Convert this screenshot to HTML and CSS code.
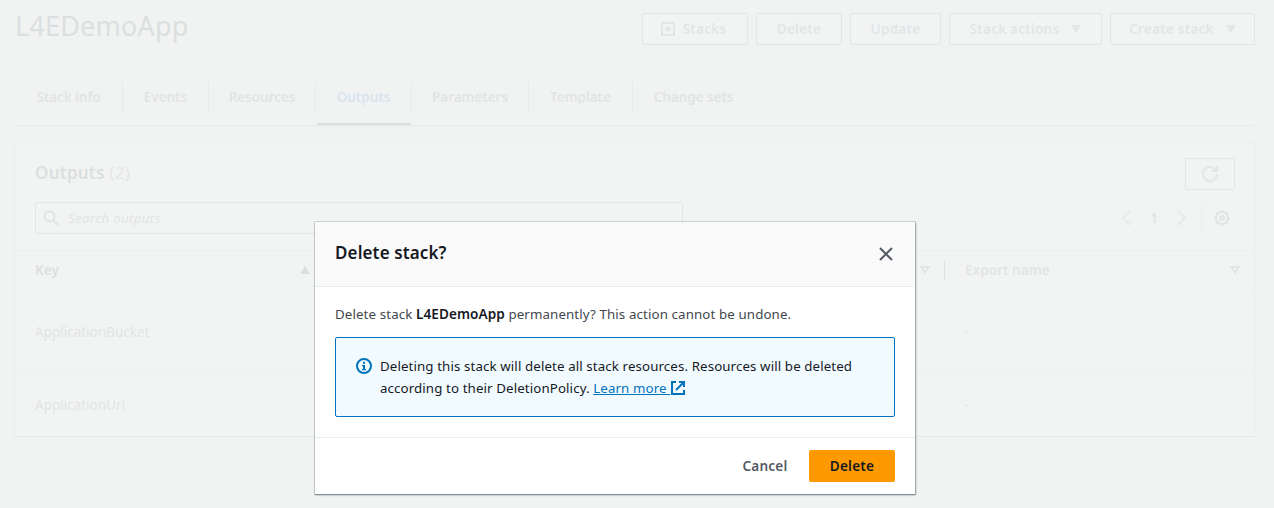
FILE: index.html
```html
<!DOCTYPE html>
<html lang="en">
<head>
<meta charset="utf-8">
<title>L4EDemoApp - Outputs</title>
<link rel="stylesheet" href="styles.css">
</head>
<body>
<main class="page">
  <header class="page-header">
    <h1 class="title">L4EDemoApp</h1>
    <div class="actions">
      <button class="btn btn-stacks"><svg class="icon" width="16" height="16" viewBox="0 0 16 16"><path d="M2 2h12v12H2zM8 5v6M5 8h6" fill="none" stroke="currentColor" stroke-width="2"/></svg><span>Stacks</span></button>
      <button class="btn btn-delete">Delete</button>
      <button class="btn btn-update">Update</button>
      <button class="btn btn-actions"><span>Stack actions</span><svg width="10" height="8" viewBox="0 0 10 8"><path d="M0 0h10L5 8z" fill="currentColor"/></svg></button>
      <button class="btn btn-create"><span>Create stack</span><svg width="10" height="8" viewBox="0 0 10 8"><path d="M0 0h10L5 8z" fill="currentColor"/></svg></button>
    </div>
  </header>
  <nav class="tabs">
    <a class="tab tab-info">Stack info</a>
    <a class="tab tab-events">Events</a>
    <a class="tab tab-resources">Resources</a>
    <a class="tab tab-outputs active">Outputs</a>
    <a class="tab tab-parameters">Parameters</a>
    <a class="tab tab-template">Template</a>
    <a class="tab tab-changes">Change sets</a>
  </nav>
  <section class="card">
    <div class="card-header">
      <h2 class="card-title">Outputs <span class="count">(2)</span></h2>
      <button class="btn btn-refresh"><svg width="18" height="18" viewBox="0 0 18 18" fill="none" stroke="currentColor" stroke-width="2"><path d="M16 9a7 7 0 1 1-2.2-5.1L16 6"/><path d="M16 1v5h-5"/></svg></button>
    </div>
    <div class="filters">
      <div class="search"><svg width="16" height="16" viewBox="0 0 16 16" fill="none" stroke="currentColor" stroke-width="2"><circle cx="6.5" cy="6.5" r="5"/><path d="M10 10l5 5"/></svg><span class="placeholder">Search outputs</span></div>
      <div class="pager">
        <svg class="chevron" width="10" height="16" viewBox="0 0 10 16"><path d="M9 1L2 8l7 7" fill="none" stroke="currentColor" stroke-width="2"/></svg>
        <span class="page-number">1</span>
        <svg class="chevron" width="10" height="16" viewBox="0 0 10 16"><path d="M1 1l7 7-7 7" fill="none" stroke="currentColor" stroke-width="2"/></svg>
        <div class="settings"><svg width="16" height="16" viewBox="0 0 16 16" fill="none" stroke="currentColor"><circle cx="8" cy="8" r="6" stroke-width="2"/><circle cx="8" cy="8" r="7.2" stroke-width="1.6" stroke-dasharray="2.83 2.83" stroke-dashoffset="1.4"/><circle cx="8" cy="8" r="2" stroke-width="2"/></svg></div>
      </div>
    </div>
    <div class="row row-head">
      <div class="cell cell-key">Key<svg width="10" height="8" viewBox="0 0 10 8"><path d="M0 8h10L5 0z" fill="currentColor"/></svg></div>
      <div class="cell cell-middle"><svg width="10" height="8" viewBox="0 0 10 8"><path d="M1.5 1h7L5 6.5z" fill="none" stroke="currentColor" stroke-width="2"/></svg></div>
      <div class="cell cell-export"><span>Export name</span><svg width="10" height="8" viewBox="0 0 10 8"><path d="M1.5 1h7L5 6.5z" fill="none" stroke="currentColor" stroke-width="2"/></svg></div>
    </div>
    <div class="row row-bucket"><div class="cell cell-key">ApplicationBucket</div><div class="cell cell-middle"></div><div class="cell cell-export">-</div></div>
    <div class="row row-url"><div class="cell cell-key">ApplicationUrl</div><div class="cell cell-middle"></div><div class="cell cell-export">-</div></div>
  </section>
</main>
<div class="modal" role="dialog">
  <header class="modal-header">
    <h2 class="modal-title">Delete stack?</h2>
    <svg width="14" height="14" viewBox="0 0 14 14"><path d="M1 1l12 12M13 1L1 13" fill="none" stroke="#545b64" stroke-width="2"/></svg>
  </header>
  <div class="modal-body">
    <p class="question">Delete stack <b>L4EDemoApp</b> permanently? This action cannot be undone.</p>
    <div class="alert">
      <svg class="info" width="16" height="16" viewBox="0 0 16 16"><circle cx="8" cy="8" r="7" fill="none" stroke="#0073bb" stroke-width="2"/><path d="M7 3.7h2v2H7zM6 7h3v4h1v1.3H6V11h1V8.3H6z" fill="#0073bb"/></svg>
      <p class="alert-text">Deleting this stack will delete all stack resources. Resources will be deleted<br>according to their DeletionPolicy. <a class="link">Learn more </a><svg class="external" width="14" height="14" viewBox="0 0 14 14"><path d="M5 1H1v12h12V9M8 1h5v5M13 1L5 9" fill="none" stroke="#0073bb" stroke-width="2"/></svg></p>
    </div>
  </div>
  <footer class="modal-footer"><button class="cancel">Cancel</button><button class="confirm">Delete</button></footer>
</div>
</body>
</html>
```
FILE: styles.css
```css
* { box-sizing: border-box; }
body { margin: 0; height: 508px; overflow: hidden; background: #f1f3f3; font: 13.5px/22px "Noto Sans", "Open Sans", sans-serif; color: #16191f; }
h1, h2, p { margin: 0; }
button { font: inherit; }
svg { flex: none; display: block; }

.page { width: 1274px; height: 508px; padding: 0 19px 0 15px; color: #e2e4e5; }
.page-header { display: flex; justify-content: space-between; height: 82px; }
.title { margin-top: 8px; font-size: 27px; line-height: 36px; font-weight: 400; color: #dcdfdf; letter-spacing: .2px; }
.actions { display: flex; gap: 8px; padding-top: 13px; }
.btn { display: flex; align-items: center; justify-content: center; height: 32px; padding: 0; border: 1px solid #e3e6e6; border-radius: 2px; background: #f2f4f4; color: #e3e6e7; font-weight: 600; font-size: 13.6px; letter-spacing: .2px; }
.btn-stacks { width: 106px; gap: 7px; padding-right: 4px; }
.btn-delete { width: 86px; }
.btn-update { width: 91px; }
.btn-actions { width: 153px; gap: 12px; }
.btn-create { width: 145px; gap: 12px; }

.tabs { display: flex; height: 44px; border-bottom: 1px solid #e8ebeb; }
.tab { position: relative; height: 30px; padding-top: 4px; border-right: 1px solid #e7eaea; text-align: center; font-weight: 600; font-size: 13.6px; letter-spacing: -.1px; }
.tab-info { width: 108px; }
.tab-events { width: 86px; }
.tab-resources { width: 107px; }
.tab-outputs { width: 96px; }
.tab-parameters { width: 117px; }
.tab-template { width: 104px; }
.tab-changes { width: 121px; border-right: 0; }
.active { color: #d8e5ee; }
.active::after { content: ""; position: absolute; left: 1px; right: 0; top: 41px; height: 2px; background: #dcdfdf; }

.card { width: 1241px; height: 295px; margin: 16px 0 0 -1px; border: 1px solid #eceeee; border-bottom-color: #e6e9e9; background: #f2f4f3; }
.card-header { display: flex; justify-content: space-between; height: 59px; padding: 15px 19px 0 20px; }
.card-title { font-size: 17px; line-height: 30px; font-weight: 600; letter-spacing: .25px; color: #dcdfe0; }
.count { font-weight: 400; color: #e4e6e7; }
.btn-refresh { width: 50px; }
.filters { display: flex; justify-content: space-between; height: 49px; padding: 0 24px 0 20px; border-bottom: 1px solid #edf0f0; }
.search { display: flex; align-items: center; gap: 9px; width: 648px; height: 32px; padding-left: 7px; border: 1px solid #e3e6e6; border-radius: 2px; }
.placeholder { font-style: italic; font-size: 13.3px; letter-spacing: .3px; }
.pager { display: flex; align-items: center; height: 32px; }
.chevron { color: #e7eaea; }
.page-number { width: 46px; text-align: center; font-weight: 600; font-size: 14px; color: #dfe2e4; }
.settings { display: flex; align-items: center; height: 31px; margin-left: 14px; padding-left: 12px; border-left: 1px solid #eceeee; }
.row { display: flex; align-items: center; padding-bottom: 2px; color: #e2e4e5; }
.row-head { height: 40px; font-weight: 600; font-size: 13.6px; border-bottom: 1px solid #eff1f1; }
.row-bucket { height: 84px; border-bottom: 1px solid #edf0f0; }
.row-url { height: 62px; }
.cell { display: flex; align-items: center; justify-content: space-between; }
.cell-key { width: 315px; padding: 0 20px; }
.row-head .cell-key { color: #dcdfe0; }
.cell-middle { width: 615px; justify-content: flex-end; padding-right: 14px; height: 20px; }
.row-head .cell-middle { border-right: 1px solid #e0e3e3; }
.cell-export { width: 309px; padding: 0 14px 0 20px; }

.modal { position: absolute; left: 315px; top: 222px; width: 600px; height: 272px; background: #fff; box-shadow: 0 0 0 1px rgba(120, 135, 140, .3), 0 1px 1px #87949a, 1px 1px 2px rgba(0, 28, 36, .3); }
.modal-header { display: flex; align-items: center; justify-content: space-between; height: 65px; padding: 0 22px 2px 20px; background: #fafafa; border-bottom: 1px solid #eaeded; }
.modal-header svg { margin-top: 1px; }
.modal-title { font-size: 17px; font-weight: 600; letter-spacing: .12px; }
.modal-body { height: 150px; padding: 16px 20px 0; }
.question { font-size: 13.3px; letter-spacing: .12px; color: #43474d; line-height: 22px; white-space: nowrap; }
.question b { font-weight: 600; font-size: 13.6px; letter-spacing: .05px; color: #16191f; }
.alert { display: flex; gap: 8px; height: 80px; margin-top: 12px; padding: 17px 20px; border: 1px solid #0073bb; border-radius: 2px; background: #f1faff; }
.info { margin-top: 3px; }
.alert-text { white-space: nowrap; font-size: 13.3px; letter-spacing: .11px; }
.link { color: #0073bb; text-decoration: underline; white-space: pre; }
.external { display: inline-block; margin-left: 1px; vertical-align: -2px; }
.modal-footer { display: flex; align-items: center; justify-content: flex-end; height: 57px; padding: 0 20px; border-top: 1px solid #eaeded; }
.modal-footer button { height: 32px; border: 0; padding: 0; border-radius: 2px; font-weight: 600; font-size: 13.6px; letter-spacing: .2px; }
.cancel { width: 88px; background: none; color: #545b64; }
.confirm { width: 86px; background: #f90; color: #16191f; }
```
